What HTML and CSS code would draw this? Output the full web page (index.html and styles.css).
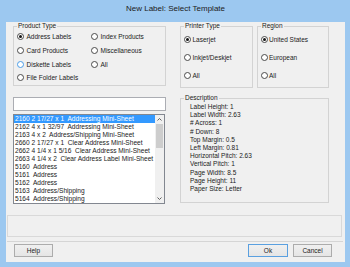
FILE: index.html
```html
<!DOCTYPE html>
<html>
<head>
<meta charset="utf-8">
<link rel="stylesheet" href="styles.css">
</head>
<body>
<div class="window">
  <div class="titlebar">New Label: Select Template</div>
  <div class="client">
    <div class="top-row">
      <fieldset class="group product">
        <legend>Product Type</legend>
        <div class="product-grid">
          <div class="radio"><span class="dot checked"></span>Address Labels</div>
          <div class="radio"><span class="dot"></span>Index Products</div>
          <div class="radio"><span class="dot"></span>Card Products</div>
          <div class="radio"><span class="dot"></span>Miscellaneous</div>
          <div class="radio"><span class="dot hover"></span>Diskette Labels</div>
          <div class="radio"><span class="dot"></span>All</div>
          <div class="radio"><span class="dot"></span>File Folder Labels</div>
        </div>
      </fieldset>
      <fieldset class="group printer">
        <legend>Printer Type</legend>
        <div class="stack">
          <div class="radio"><span class="dot checked"></span>Laserjet</div>
          <div class="radio"><span class="dot"></span>Inkjet/Deskjet</div>
          <div class="radio"><span class="dot"></span>All</div>
        </div>
      </fieldset>
      <fieldset class="group region">
        <legend>Region</legend>
        <div class="stack">
          <div class="radio"><span class="dot checked"></span>United States</div>
          <div class="radio"><span class="dot"></span>European</div>
          <div class="radio"><span class="dot"></span>All</div>
        </div>
      </fieldset>
    </div>
    <div class="mid-row">
      <div class="left-col">
        <div class="search"></div>
        <div class="listbox">
          <div class="items">
            <div class="item selected">2160 2 17/27 x 1  Addressing Mini-Sheet</div>
            <div class="item">2162 4 x 1 32/97  Addressing Mini-Sheet</div>
            <div class="item">2163 4 x 2  Address/Shipping Mini-Sheet</div>
            <div class="item">2660 2 17/27 x 1  Clear Address Mini-Sheet</div>
            <div class="item">2662 4 1/4 x 1 5/16  Clear Address Mini-Sheet</div>
            <div class="item">2663 4 1/4 x 2  Clear Address Label Mini-Sheet</div>
            <div class="item">5160  Address</div>
            <div class="item">5161  Address</div>
            <div class="item">5162  Address</div>
            <div class="item">5163  Address/Shipping</div>
            <div class="item">5164  Address/Shipping</div>
          </div>
          <div class="scrollbar">
            <div class="arrow">
              <svg width="5" height="3" viewBox="0 0 5 3"><path d="M0.5 2.5 L2.5 0.5 L4.5 2.5" fill="none" stroke="#606060" stroke-width="1"/></svg>
            </div>
            <div class="track"><div class="thumb"></div></div>
            <div class="arrow">
              <svg width="5" height="3" viewBox="0 0 5 3"><path d="M0.5 0.5 L2.5 2.5 L4.5 0.5" fill="none" stroke="#606060" stroke-width="1"/></svg>
            </div>
          </div>
        </div>
      </div>
      <fieldset class="group description">
        <legend>Description</legend>
        <div class="desc-lines">
          <div>Label Height: 1</div>
          <div>Label Width: 2.63</div>
          <div># Across: 1</div>
          <div># Down: 8</div>
          <div>Top Margin: 0.5</div>
          <div>Left Margin: 0.81</div>
          <div>Horizontal Pitch: 2.63</div>
          <div>Vertical Pitch: 1</div>
          <div>Page Width: 8.5</div>
          <div>Page Height: 11</div>
          <div>Paper Size: Letter</div>
        </div>
      </fieldset>
    </div>
    <div class="status"></div>
    <div class="separator"></div>
    <div class="buttons">
      <div class="btn help">Help</div>
      <div class="spacer"></div>
      <div class="btn ok">Ok</div>
      <div class="btn cancel">Cancel</div>
    </div>
  </div>
</div>
</body>
</html>
```
FILE: styles.css
```css
* { box-sizing: border-box; }
html, body { margin: 0; padding: 0; }
body {
  width: 350px;
  height: 267px;
  overflow: hidden;
  background: #9cc8f0;
  font-family: "Liberation Sans", Arial, sans-serif;
  font-size: 6.5px;
  color: #1a1a1a;
}
.window {
  display: flex;
  flex-direction: column;
  height: 267px;
  padding: 0 5px 5px 6px;
}
.titlebar {
  height: 22px;
  display: flex;
  align-items: center;
  justify-content: center;
  padding-bottom: 6px;
  font-size: 8px;
  color: #202020;
  white-space: nowrap;
}
.client {
  flex: 1;
  background: #f0f0f0;
  display: flex;
  flex-direction: column;
  padding-bottom: 5px;
}
.top-row {
  display: flex;
  align-items: flex-start;
  padding-left: 7px;
  height: 66px;
}
.group {
  margin: 0;
  padding: 0;
  border: 1px solid #d3d3d3;
  min-width: 0;
}
.group legend {
  margin-left: 3px;
  padding: 0 1px;
  line-height: 8px;
  font-size: 6.5px;
  white-space: nowrap;
}
.product { width: 153px; }
.printer { width: 73px; margin-left: 14px; }
.region { width: 72px; margin-left: 4px; }
.product-grid {
  display: grid;
  grid-template-columns: 74px auto;
  grid-auto-rows: 13.7px;
  padding-left: 3px;
}
.stack {
  display: grid;
  grid-auto-rows: 18px;
  padding: 0 0 3px 3px;
}
.region .stack { padding-left: 2.5px; }
.radio {
  display: flex;
  align-items: center;
  gap: 2.5px;
  white-space: nowrap;
}
.printer .radio, .region .radio { gap: 1.5px; }
.dot {
  flex: none;
  position: relative;
  width: 7px;
  height: 7px;
  border-radius: 50%;
  border: 1px solid #4a4a4a;
  background: #fff;
}
.dot.hover { border-color: #4a9ee8; }
.dot.checked::after {
  content: "";
  position: absolute;
  inset: 1px;
  border-radius: 50%;
  background: #141414;
}
.mid-row {
  display: flex;
  align-items: flex-start;
  margin-top: 6px;
  padding-left: 7px;
  height: 110px;
}
.left-col {
  width: 153px;
  display: flex;
  flex-direction: column;
}
.search {
  margin-top: 3px;
  height: 14px;
  background: #fff;
  border: 1px solid #abadb3;
}
.listbox {
  margin-top: 3px;
  width: 152px;
  height: 90px;
  background: #fff;
  border: 1px solid #828790;
  display: flex;
}
.items {
  flex: 1;
  min-width: 0;
}
.item {
  height: 8px;
  line-height: 8px;
  padding-left: 1px;
  font-size: 6.6px;
  white-space: pre;
  overflow: hidden;
}
.item.selected {
  background: #3399ff;
  color: #fff;
}
.scrollbar {
  width: 9px;
  display: flex;
  flex-direction: column;
  background: #f0f0f0;
}
.arrow {
  height: 9px;
  display: flex;
  align-items: center;
  justify-content: center;
}
.track {
  flex: 1;
  padding: 0 1px;
}
.thumb {
  height: 24px;
  background: #cdcdcd;
}
.description {
  width: 149px;
  margin-left: 14px;
}
.desc-lines {
  padding: 1px 0 9px 9px;
}
.desc-lines div {
  height: 8.2px;
  line-height: 8.2px;
  white-space: nowrap;
}
.status {
  margin: 11px 3px 0 1px;
  height: 22px;
  border: 1px solid #d9d9d9;
}
.separator {
  margin: 4px 2px 0 1px;
  height: 1px;
  background: #d5d5d5;
}
.buttons {
  margin-top: 2px;
  height: 13px;
  display: flex;
  padding: 0 13px 0 8px;
  gap: 5px;
}
.spacer { flex: 1; }
.btn {
  width: 39px;
  height: 13px;
  display: flex;
  align-items: center;
  justify-content: center;
  border: 1px solid #acacac;
  background: linear-gradient(#f0f0f0, #e5e5e5);
}
.btn.ok {
  width: 40px;
  border-color: #5aa0e0;
}
```
